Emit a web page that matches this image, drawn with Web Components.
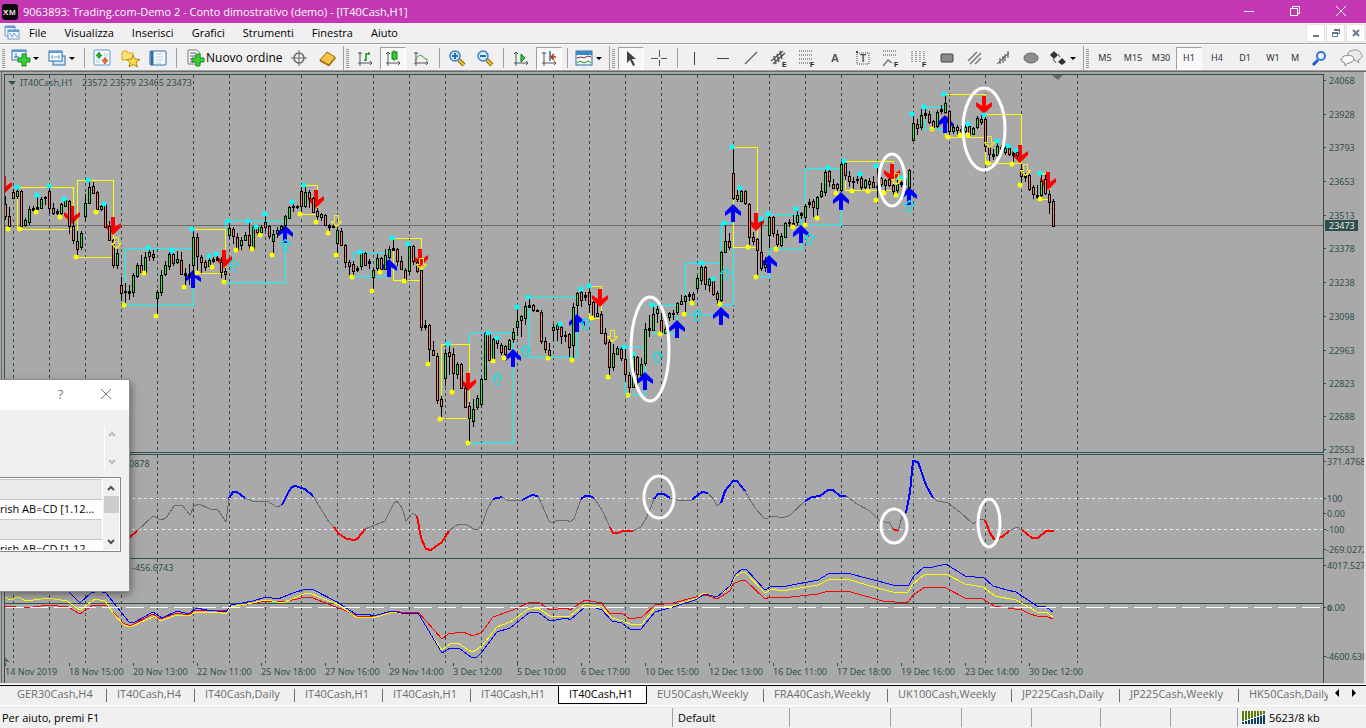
<!DOCTYPE html>
<html lang="it">
<head>
<meta charset="utf-8">
<title>9063893: Trading.com-Demo 2 - Conto dimostrativo (demo) - [IT40Cash,H1]</title>
<style>
  html, body { margin: 0; height: 100%; }
  body { font: 11px/16px "Open Sans", "Noto Sans", sans-serif; color: #000; background: #f0f0f0; overflow: hidden; }
</style>
</head>
<body>
<trading-terminal></trading-terminal>
<script>
const define = (name, css, html, init) => {
  customElements.define(name, class extends HTMLElement {
    connectedCallback() {
      if (this.shadowRoot) return;
      const root = this.attachShadow({ mode: 'open' });
      root.innerHTML = `<style>
        * { box-sizing: border-box; }
        button { font: inherit; color: inherit; border: 0; margin: 0; padding: 0; background: none; white-space: nowrap; }
        svg { display: block; }
        ${css}</style>${typeof html === 'function' ? html(this) : html}`;
      if (init) init(root, this);
    }
  });
};

/* ---------- icons ---------- */
const PLUS = '<path d="M10 6h4v4h4v4h-4v4h-4v-4H6v-4h4z" transform="translate(-1,-2)" fill="#3ad03a" stroke="#128a18"/>';
const AXES = '<path d="M3 2v14M1 13h14M1 4l2-2 2 2M13 11l2 2-2 2" fill="none" stroke="#555"/>';
const LENS = (sign) => `<path d="M10 10l5 5" stroke="#8a6508" stroke-width="4"/><path d="M10 10l5 5" stroke="#f2c832" stroke-width="2"/><circle cx="6" cy="6" r="5" fill="#d4ebfb" stroke="#3a7fc0" stroke-width="1.5"/><path d="${sign}" stroke="#2a6cb0" stroke-width="2"/>`;
const FDOTS = (n) => Array.from({ length: n }, (_, i) => `<path d="M0 ${1 + i * 4}h14" stroke="#444" stroke-dasharray="1 1"/>`).join('');
const letter = (c, x, y, size, fill) => `<text x="${x}" y="${y}" fill="${fill}" style="font:bold ${size}px 'Liberation Sans',Arial,sans-serif">${c}</text>`;
const F = letter('F', 11, 17, 7, '#222');
const ICONS = {
  xm: '<rect width="16" height="16" rx="3" fill="#0a0a0a"/>' + letter('X', 1, 11, 8, '#fff') + letter('M', 7, 11, 8, '#ddd') + '<path d="M2 11l2-2" stroke="#e02020" stroke-width="1.5"/>',
  doc: '<path d="M1 1h10v4M1 1v10h3" fill="none" stroke="#6a9bd0"/><path d="M1 2h10" stroke="#6a9bd0" stroke-width="2"/><rect x="4" y="5" width="11" height="9" fill="#f4f9ff" stroke="#6a9bd0"/><path d="M4 6h11" stroke="#6a9bd0" stroke-width="2"/><path d="M6 8l2 4 2-4 2 3 2 1" fill="none" stroke="#6a9bd0"/>',
  newchart: '<rect x="-1" y="0" width="14" height="10" fill="#eef6fd" stroke="#3b76b0"/><path d="M-1 1h14" stroke="#5b9bd5" stroke-width="2"/><path d="M3 3v5M1 7h5" stroke="#3b76b0"/>' + PLUS,
  profiles: '<rect x="4" y="6" width="12" height="9" fill="#cfe6f8" stroke="#2f6ea8"/><rect x="0" y="1" width="13" height="10" fill="#f4faff" stroke="#2f6ea8"/><path d="M0 2h13" stroke="#5b9bd5" stroke-width="2"/><path d="M2 7h9M3 5v4M10 5v4" stroke="#8aa9c4"/>',
  market: '<rect x="0" y="0" width="16" height="15" rx="1" fill="#f5fafe" stroke="#5b9bd5"/><path d="M10 4h4M10 6h4M2 10h4M2 12h4" stroke="#b8cde0"/><path d="M5 2l3 4H6v2H4V6H2z" fill="#28b428" stroke="#0b6b10" stroke-width=".6"/><path d="M11 14l3-4h-2V8h-2v2H8z" fill="#f0702a" stroke="#b03a08" stroke-width=".6"/>',
  navigator: '<path d="M0 3q0-2 2-2h3l1 2h5v7H0z" fill="#fbe27a" stroke="#d8a820"/><path d="M11 5l2 4 5 .5-4 3 1.500 4.500-4.500-2.500-4 2.500 1-4.500-3-3 4.500-.5z" fill="#fbd84a" stroke="#b8860b"/>',
  terminal: '<rect x="0" y="1" width="16" height="14" rx="1" fill="#f5fafe" stroke="#2f6ea8"/><path d="M2 1v14" stroke="#2f6ea8" stroke-width="3"/><path d="M6 4h7M6 7h7M6 10h7M6 13h5" stroke="#b8cde0"/>',
  order: '<path d="M1 0h9l3 3v11H1z" fill="#fff" stroke="#777"/><path d="M3 3h6M3 6h7M3 9h5M3 12h4" stroke="#555"/>' + PLUS,
  target: '<circle cx="8" cy="8" r="5" fill="none" stroke="#666" stroke-width="1.500"/><path d="M8 0v16M0 8h16" stroke="#666"/>',
  book: '<path d="M1 10L8 2l8 5-6 8z" fill="#f5c542" stroke="#9a6a08"/><path d="M1 10l9 5 6-8v2l-6 7-9-5z" fill="#fff3c4" stroke="#9a6a08"/>',
  bars: AXES + '<path d="M9 3v8M7 10h2M9 4h3M12 2v3" stroke="#149a1e" stroke-width="1.500" fill="none"/>',
  candles: AXES + '<path d="M9 0v11" stroke="#0a7a10"/><rect x="7" y="2" width="5" height="7" fill="#30d040" stroke="#0a7a10"/>',
  line: AXES + '<path d="M2 11q4-8 7-5t6 4" fill="none" stroke="#2b9e33"/>',
  zoomin: LENS('M3 6h6M6 3v6'),
  zoomout: LENS('M3 6h6'),
  autoscroll: AXES + '<path d="M8 4l4 4-4 4z" fill="#2fd03f" stroke="#0a7a10"/>',
  shift: AXES + '<path d="M9 1v10" stroke="#2f6ea8" stroke-width="1.500"/><path d="M15 7h-5M13 4l-3 3 3 3" fill="none" stroke="#b03a08" stroke-width="1.500"/>',
  template: '<rect x="0" y="1" width="16" height="14" fill="#f5fafe" stroke="#2f6ea8"/><path d="M0 3h16" stroke="#3b86c8" stroke-width="4"/><path d="M1 8l4-1 3 1 4-2 3 1" fill="none" stroke="#902020"/><path d="M1 13l3-2 4 2 4-2 3 2" fill="none" stroke="#149a1e"/>',
  cursor: '<path d="M4 1v12l3-3 3 6 2-1-3-6h4z" fill="#444"/>',
  cross: '<path d="M8 0h1v7H8zM8 10h1v6H8zM0 8h7v1H0zM10 8h6v1h-6z" fill="#555"/>',
  vline: '<path d="M7 2h1v13H7z" fill="#444"/>',
  hline: '<path d="M2 8h12v1H2z" fill="#444"/>',
  trend: '<path d="M2 14L14 2" stroke="#666" stroke-width="1.500"/>',
  channel: '<path d="M0 11L12 1M2 14L14 3M3 6l2 8M6 4l2 8M9 1l2 8" stroke="#555" stroke-width="1.500"/>' + letter('E', 11, 17, 7, '#222'),
  fibo: FDOTS(4) + F,
  text: letter('A', 4, 12, 11, '#555'),
  label: '<rect x="2" y="3" width="12" height="11" fill="none" stroke="#444" stroke-dasharray="1 1"/><rect x="1" y="1" width="2" height="2" fill="#444"/>' + letter('T', 5, 12, 10, '#555'),
  fibofan: FDOTS(2) + '<path d="M0 16l5-6 4 3" fill="none" stroke="#777" stroke-width="1.500"/>' + F,
  fibotime: '<path d="M1 1v12M5 1v12M9 1v12M13 1v9" stroke="#444" stroke-dasharray="1 1"/>' + F,
  rect: '<rect x="2" y="4" width="12" height="8" rx="1" fill="#8c8c8c" stroke="#444"/>',
  parallel: '<path d="M1 11L10 2M3 14L14 3M8 14l6-6" stroke="#777" stroke-width="1.500"/>',
  wave: '<path d="M2 14L14 3M5 8v6M8 6v7M10 4v7M13 1v7" stroke="#444" fill="none"/>',
  ellipse: '<ellipse cx="8" cy="8" rx="7" ry="5" fill="#8c8c8c" stroke="#666"/>',
  arrows: '<path d="M4 1l4 4-4 4-4-4zM12 8l4 4-4 3-4-3z" fill="#333"/><path d="M3 9l3 4M8 4l2 3" stroke="#444"/>',
  search: '<path d="M7 10l-5 5" stroke="#2358c8" stroke-width="3"/><circle cx="10" cy="6" r="4" fill="#eef4ff" stroke="#3a6fe0" stroke-width="2"/>',
  chat: '<path d="M7 1q8-3 11 2t-3 7l1 3-4-3q-6 0-7-4t2-5z" fill="#eaeaea" stroke="#999"/><path d="M1 6q6-2 9 1t-3 6H5l-3 3v-3q-4-1-4-3t3-4z" fill="#f8f8f8" stroke="#888"/>'
};
const icon = (n, s = 16) => `<svg width="${s}" height="${s}" viewBox="0 0 ${s} ${s}" overflow="visible" aria-hidden="true">${ICONS[n]}</svg>`;

/* ---------- frame ---------- */
define('title-bar', `
  :host { display: flex; align-items: center; height: 23px; background: #c436b2; color: #fff; padding: 0 2px 0 2px; }
  h1 { font: inherit; margin: 0 auto 0 5px; }
  button { width: 46px; height: 23px; display: grid; place-items: center; padding-bottom: 2px; }
`, `${icon('xm')}<h1>9063893: Trading.com-Demo 2 - Conto dimostrativo (demo) - [IT40Cash,H1]</h1>
  <button aria-label="Riduci"><svg width="10" height="10"><path d="M0 5h10v1H0z" fill="#fff"/></svg></button>
  <button aria-label="Ripristina"><svg width="10" height="10" shape-rendering="crispEdges" fill="#fff"><path d="M0 2h8v8H0zM1 3v6h6V3z" fill-rule="evenodd"/><path d="M2 0h8v8H8V7h1V1H3v1H2z"/></svg></button>
  <button aria-label="Chiudi"><svg width="10" height="10"><path d="M0 0l10 10M10 0L0 10" stroke="#fff"/></svg></button>`);

define('menu-bar', `
  :host { display: flex; align-items: center; height: 20px; padding-left: 4px; background: #f0f0f0; }
  nav { display: flex; margin: 0 auto 0 0; }
  nav button { padding: 0 9px; height: 20px; }
  .mdi { width: 19px; height: 18px; background: #fff; border: 1px solid #e3e3e3; margin-right: 1px; display: grid; place-items: center; }
`, () => `${icon('doc')}<nav>${['File', 'Visualizza', 'Inserisci', 'Grafici', 'Strumenti', 'Finestra', 'Aiuto'].map(t => `<button>${t}</button>`).join('')}</nav>
  <button class="mdi" aria-label="Riduci grafico"><svg width="8" height="8"><path d="M1 6h6v2H1z" fill="#66788c"/></svg></button>
  <button class="mdi" aria-label="Ripristina grafico"><svg width="8" height="8" shape-rendering="crispEdges" fill="#66788c"><path d="M0 3h6v5H0zM1 5v2h4V5z" fill-rule="evenodd"/><path d="M2 0h6v5H6V4h1V2H2z"/></svg></button>
  <button class="mdi" aria-label="Chiudi grafico"><svg width="8" height="8"><path d="M1 1l6 6M7 1L1 7" stroke="#66788c" stroke-width="2"/></svg></button>`);

define('tool-button', `
  :host { display: block; }
  button { display: flex; align-items: center; justify-content: center; width: 28px; height: 24px; }
  :host([split]) button { width: 36px; justify-content: flex-start; padding-left: 5px; gap: 4px; }
  :host([wide]) button { width: 105px; justify-content: flex-start; padding-left: 7px; gap: 3px; font-size: 12px; padding-bottom: 1px; }
  :host([tf]) button { font: 9px/16px "Noto Sans", sans-serif; color: #333; }
  :host([narrow]) button { width: 16px; }
  :host([end]) button { width: 32px; }
  :host([pressed]) button { width: 26px; margin: 0 1px; height: 23px; background: #f8f8f8; border: 1px solid #fff; border-top-color: #a0a0a0; border-left-color: #a0a0a0; }
`, el => {
  const n = el.getAttribute('icon');
  return `<button ${el.title ? `aria-label="${el.title}"` : ''}>${n ? icon(n) : ''}<slot></slot>${el.hasAttribute('split') ? '<svg width="6" height="3"><path d="M0 0h6L3 3z"/></svg>' : ''}</button>`;
});

define('tool-bar', `
  :host { display: flex; align-items: center; height: 29px; padding: 2px 0 1px; background: #f0f0f0; border-top: 1px solid #a0a0a0; border-bottom: 1px solid #696969; box-shadow: inset 0 1px #fff, inset 0 -1px #a0a0a0; }
  .group { display: flex; align-items: center; margin-right: 2px; }
  .last { margin-right: auto; }
  i { width: 8px; height: 25px; border-left: 1px solid #a0a0a0; padding: 3px 1px 3px 2px; }
  i::before { content: ""; display: block; width: 3px; height: 19px; background: repeating-linear-gradient(#999 0 1px, #f0f0f0 1px 2px); }
  .group:first-of-type i { border-color: transparent; padding-left: 1px; }
  b { width: 8px; height: 20px; background: linear-gradient(#a0a0a0, #a0a0a0) 4px 0 / 1px 100% no-repeat; }
`, () => {
  const t = (n, title, a = '') => `<tool-button icon="${n}" title="${title}" ${a}></tool-button>`;
  const tf = (n, a = '') => `<tool-button tf ${a}>${n}</tool-button>`;
  return `<div class="group"><i></i>${t('newchart', 'Nuovo grafico', 'split')}${t('profiles', 'Profili', 'split')}<b></b>${t('market', 'Market Watch')}${t('navigator', 'Navigatore')}${t('terminal', 'Terminale')}<b></b><tool-button icon="order" wide>Nuovo ordine</tool-button>${t('target', 'Strategia')}${t('book', 'MetaEditor')}</div>
  <div class="group"><i></i>${t('bars', 'Barre')}${t('candles', 'Candele', 'pressed')}${t('line', 'Linea')}<b></b>${t('zoomin', 'Ingrandisci')}${t('zoomout', 'Riduci')}<b></b>${t('autoscroll', 'Scorrimento')}${t('shift', 'Spostamento', 'pressed')}<b></b>${t('template', 'Modelli', 'split')}</div>
  <div class="group"><i></i>${t('cursor', 'Cursore', 'pressed')}${t('cross', 'Mirino')}<b></b>${t('vline', 'Linea verticale')}${t('hline', 'Linea orizzontale')}${t('trend', 'Trendline')}${t('channel', 'Canale')}${t('fibo', 'Fibonacci')}${t('text', 'Testo')}${t('label', 'Etichetta')}${t('fibofan', 'Ventaglio')}${t('fibotime', 'Fasce orarie')}${t('rect', 'Rettangolo')}${t('parallel', 'Linee parallele')}${t('wave', 'Onde')}${t('ellipse', 'Ellisse')}${t('arrows', 'Frecce', 'split')}</div>
  <div class="group last"><i></i>${tf('M5')}${tf('M15')}${tf('M30')}${tf('H1', 'pressed')}${tf('H4')}${tf('D1')}${tf('W1')}${tf('M', 'narrow')}</div>
  ${t('search', 'Cerca', 'end')}${t('chat', 'Chat', 'end')}`;
});

/* ---------- market data, in window coordinates ---------- */
/* candle: high, body top, body bottom, low, then u (up) or d (down); one every 4px from x = 5 */
const CANDLES = `196 204 216 220d|207 216 226 229d|189 192 198 199d|187 191 196 199u|190 191 226 229d|218 220 225 227u|206 209 222 225u|206 208 210 212d|196 207 209 210u|197 199 208 209u|196 197 198 205d|187 191 208 214d|203 208 213 215d|209 211 213 215d|203 204 213 216u|199 200 206 207u|200 201 226 234d|219 226 240 244d|231 241 249 257d|231 233 247 250u|194 203 216 221u|180 187 203 204u|182 186 193 194d|191 192 209 210d|205 206 209 211u|203 204 227 228d|221 226 240 241d|239 240 265 268d|249 253 265 269u|277 285 293 301d|283 291 292 305d|285 291 293 300d|273 275 292 297u|263 265 276 278u|255 265 272 273d|252 257 273 274u|249 252 256 261u|250 254 257 261d|290 292 298 316u|270 275 292 296u|261 265 274 276u|252 254 266 270u|251 254 263 266d|251 259 262 264u|252 260 274 275d|268 273 275 287d|264 274 275 285d|229 237 265 274u|233 237 256 273d|255 257 262 273d|260 262 267 271d|257 260 266 267u|257 259 261 263u|254 258 260 261d|257 262 272 278d|268 271 274 282d|222 228 235 239u|227 229 236 244d|233 237 250 251d|237 240 245 250u|232 235 240 241u|222 235 245 250d|226 227 249 250u|226 227 232 235d|225 227 232 235u|215 222 227 231d|225 226 236 239d|230 234 241 255u|227 230 233 238u|225 226 229 231u|215 216 225 229u|206 207 218 219u|203 206 207 212d|205 206 207 209d|187 191 206 214d|187 192 206 208u|190 192 198 208d|197 198 212 213d|208 211 216 221d|213 214 217 221u|214 215 225 226d|224 225 227 233d|224 226 227 228d|225 230 243 255u|228 231 245 246d|244 245 262 268d|260 262 266 275d|261 264 271 276d|266 268 270 272u|252 253 266 270u|252 253 265 266d|259 261 263 269u|268 270 277 291u|254 258 268 271u|257 258 269 271d|249 255 269 270u|246 249 257 259u|239 248 250 251d|248 249 261 266d|256 261 269 270d|268 270 280 281d|245 246 271 275u|245 246 261 265d|260 262 271 273d|269 270 327 331d|320 325 327 330d|324 325 349 363d|341 350 355 356d|353 356 400 404d|396 399 406 418d|349 353 378 386u|346 352 356 375d|348 354 373 391d|362 364 374 379u|363 364 388 389d|385 388 407 408d|402 406 418 443d|399 409 421 427u|395 398 407 410u|378 379 404 407u|332 333 379 380u|333 334 360 361d|338 339 359 361u|337 339 343 349d|343 345 352 355d|345 346 354 358d|339 340 349 350u|328 332 339 343u|307 321 327 336u|315 316 320 337u|302 306 318 325u|297 305 307 308d|304 305 310 312d|309 310 311 312d|310 312 341 344d|337 341 349 353d|343 350 355 357d|324 327 330 341d|323 325 329 341u|324 327 336 344d|331 335 336 342d|333 334 347 357d|303 307 345 359u|292 293 305 315u|288 292 300 307d|292 295 297 301u|286 292 304 313d|301 302 317 318d|304 313 316 317u|311 314 333 334d|328 333 343 345d|338 342 367 377d|344 353 367 371u|346 348 354 355u|347 349 358 361d|348 359 374 382d|372 375 387 393d|353 356 387 388u|356 357 374 385d|358 364 375 376u|323 329 363 366u|315 328 330 337d|306 314 330 331u|306 309 313 323u|313 320 332 334d|317 329 333 334u|312 313 317 321u|310 313 314 320d|302 303 312 315u|295 301 304 305u|295 296 301 313u|292 294 296 301d|292 294 299 303d|275 278 288 292u|263 267 280 285u|266 267 284 290d|278 279 285 292u|279 280 294 296d|291 293 299 304d|251 252 300 304u|224 241 252 253u|233 241 247 250d|147 173 198 200d|190 195 199 202d|187 191 201 202u|190 191 203 205d|203 204 237 247d|232 237 241 245d|238 239 250 277d|220 252 268 271d|257 264 267 272u|215 217 235 248u|216 217 233 237d|230 234 244 248d|233 236 245 247u|222 223 237 238u|219 222 223 227d|215 223 224 227d|209 215 222 225u|212 213 215 219d|204 206 217 224u|199 202 204 208u|199 201 207 217d|196 197 208 218u|183 191 196 198u|170 172 192 196u|168 171 181 187d|179 184 188 189d|183 184 188 193d|162 164 190 192u|161 163 175 180d|171 176 181 187d|177 181 182 190d|176 179 180 184d|174 178 187 190d|179 180 187 189u|178 181 184 189d|176 182 187 188d|166 186 187 199d|177 178 184 187d|179 180 185 193u|178 179 185 187d|184 185 191 195d|180 184 190 195u|177 182 184 187u|177 178 184 187d|169 170 187 190u|115 123 140 141u|119 124 128 135d|109 115 127 130u|107 113 115 119u|111 114 122 124d|120 121 127 129d|110 112 126 128u|105 109 111 114d|94 103 112 114u|110 111 131 137d|124 127 131 134u|125 127 130 135d|126 129 131 134d|125 127 131 133u|124 126 135 136d|127 128 134 135u|116 118 127 129u|115 119 122 125d|115 119 146 152d|146 147 154 163d|149 154 156 160d|143 146 155 156u|145 147 149 152u|146 148 152 155u|146 148 154 156d|152 153 155 163u|150 152 155 159d|164 169 176 184d|173 175 177 182d|174 175 189 191d|185 187 194 199d|185 195 197 199d|174 181 195 199u|175 179 193 195d|190 194 202 214d|199 201 226 227d`;

const CYAN_DOTS = '17,187 37,195 49,186 64,199 88,180 104,204 148,248 172,251 192,229 209,256 216,254 228,221 248,221 256,227 265,214 292,202 304,185 360,252 392,238 408,244 448,344 488,333 497,338 517,307 528,297 560,324 581,289 589,286 624,347 633,354 652,305 701,263 713,279 724,223 732,147 740,188 761,219 768,214 796,209 828,168 844,161 860,174 876,166 901,178 912,114 924,107 944,94 968,124 984,115 997,141 1008,146 1016,150 1040,173';
const YELLOW_DOTS = '8,229 20,229 36,212 60,217 76,257 96,212 124,305 144,273 156,316 184,287 197,273 212,267 224,282 236,250 252,249 260,235 272,255 300,214 316,222 328,233 336,255 352,277 372,291 380,272 404,281 428,364 440,419 452,392 468,443 493,361 504,358 548,358 572,360 592,318 608,377 628,395 660,334 684,314 692,303 720,304 748,247 756,277 776,249 793,227 805,225 817,218 836,193 852,191 868,191 876,200 884,193 896,195 932,129 948,137 960,135 968,135 988,163 1012,164 1020,185 1040,199';
/* x1 y1 x2 y2 */
const CYAN_BOXES = '125 248 193 305|225 221 285 282|353 252 389 276|469 333 513 443|529 297 577 357|625 347 645 394|653 305 677 333|685 263 721 314|721 223 733 304|757 219 769 277|769 214 801 249|805 168 841 225|897 178 909 195|925 107 945 129';
const YELLOW_BOXES = '17 187 73 229|77 180 113 257|193 229 225 273|301 185 317 214|393 238 421 280|441 344 469 418|589 286 601 318|733 147 757 247|845 161 893 190|945 94 985 137|985 114 1021 163|1041 173 1049 199';
const SELL = '4,194 72,224 113,235 224,268 316,208 420,267 468,391 600,307 756,231 892,182 984,114 1020,163 1048,190';
const BUY = '193,270 285,225 389,259 513,349 577,314 645,372 677,320 721,307 733,204 769,255 801,225 841,192 909,187 945,115';
const BUY_HINT = '285,239 233,259 497,373 525,345 585,318 657,351 697,309 725,268 809,233 909,200';
const SELL_HINT = '116,249 336,227 421,270 612,342 896,185 989,148 1025,176';

/* oscillator: colour letter followed by its points; each run starts at the end of the previous one */
const OSC = [
  ['r', '118,545 130,537 137,531'],
  ['g', '153,516 161,520 166,518 174,506 182,505 190,515 194,506 199,504 210,509 218,510 226,522 229,498'],
  ['b', '233,492 237,492 245,498'],
  ['g', '252,501 267,501 277,507 282,505'],
  ['b', '289,491 292,487 295,486 305,489 313,496'],
  ['g', '329,522 334,527'],
  ['r', '339,534 347,539 355,540 358,538 365,529'],
  ['g', '370,527 385,521 394,503 397,501 402,508 406,521 413,513 417,516'],
  ['r', '421,538 426,549 431,550 442,542 449,531'],
  ['g', '455,526 460,524 467,525 474,529 478,529 482,525 487,510 493,499'],
  ['b', '502,497'],
  ['g', '507,500 522,500'],
  ['b', '532,495 538,496'],
  ['g', '549,521 553,523 558,520 567,520 570,522 574,519 581,499'],
  ['b', '585,496 590,496 594,498'],
  ['g', '602,510 610,527'],
  ['r', '613,533 618,533 623,531 633,531'],
  ['g', '641,527 647,517 654,499'],
  ['b', '658,494 664,494 670,498'],
  ['g', '677,500 692,500'],
  ['b', '694,498 702,492 708,493'],
  ['g', '714,500 717,506 721,503'],
  ['b', '725,491 733,481 737,481 745,491'],
  ['g', '755,508 765,519 773,516 783,518 790,515 805,501'],
  ['b', '812,497 820,496 828,490 833,490 840,496 846,496'],
  ['g', '857,504 870,511 880,521 890,523 893,529'],
  ['r', '898,531'],
  ['g', '902,517 906,513'],
  ['b', '910,492 913,461 918,462 926,485 933,498'],
  ['g', '938,501 948,503 960,512 973,524 981,519 985,520'],
  ['r', '990,533 994,539 1002,537 1009,531'],
  ['g', '1017,527 1022,530'],
  ['r', '1032,538 1038,538 1046,531 1054,531']
];
const OSC_COLORS = { r: ['#f00', 2], b: ['#00f', 2], g: ['#696969', 1] };
const MACD = {
  '#f00': '5,606 26,608 48,605 68,607 80,614 93,605 107,606 123,623 130,626 153,614 160,619 177,613 189,615 195,610 226,611 230,607 266,601 283,602 306,597 313,598 338,608 340,608 357,616 373,616 393,611 406,613 418,612 442,639 448,634 463,632 473,636 482,632 493,617 513,610 530,602 538,602 550,610 567,608 570,610 585,600 602,603 609,613 623,614 630,619 642,617 655,605 673,603 700,596 707,595 717,599 730,591 733,584 740,581 745,580 765,599 770,597 782,598 818,594 828,591 847,591 883,601 906,603 909,601 913,595 925,587 946,588 965,598 983,599 994,606 1022,610 1030,614 1037,616 1048,617 1053,619',
  '#ff0': '5,597 10,600 18,597 26,601 48,598 67,601 80,610 95,599 105,601 113,613 124,625 130,627 155,616 160,621 177,615 189,616 195,612 217,612 226,614 230,607 247,604 266,600 283,603 306,593 312,594 339,605 356,617 373,618 393,612 406,614 418,613 430,633 442,650 450,644 458,643 468,650 473,652 482,646 497,627 510,622 530,608 538,608 550,616 570,616 585,604 602,607 612,618 623,621 632,625 642,624 655,608 673,606 697,598 703,593 717,597 730,587 735,577 740,573 745,572 765,593 772,589 782,591 818,585 828,580 847,579 877,588 897,593 908,592 913,584 925,574 946,574 965,584 983,587 995,596 1016,600 1037,612 1046,612 1053,617',
  '#00f': '5,588 57,591 68,591 80,603 91,593 98,591 106,593 117,607 129,622 135,622 153,612 162,618 177,611 189,614 196,608 207,610 226,612 231,605 253,601 266,597 278,599 293,593 306,589 312,589 337,602 357,615 368,614 373,616 392,611 406,614 418,613 442,653 450,648 460,649 471,657 477,657 482,652 497,632 510,628 530,612 538,612 550,621 567,618 570,620 585,607 593,607 602,610 612,621 622,623 631,630 641,629 655,612 673,607 695,600 705,594 717,597 730,586 735,575 742,569 746,569 765,590 772,586 782,587 818,580 828,574 847,573 893,585 906,586 909,585 913,577 924,567 933,567 946,564 965,576 975,577 983,577 993,586 1007,590 1016,592 1037,606 1046,607 1053,612'
};

const each = (s, f) => s.split(' ').map(p => f(...p.split(',').map(Number))).join('');
const marks = (s, d, attrs) => `<g ${attrs}>${each(s, (x, y) => `<path transform="translate(${x},${y})" d="${d}"/>`)}</g>`;
/* one-pixel frames, cut out of filled rectangles so that they stay sharp */
const boxes = (s, c) => `<path fill="${c}" fill-rule="evenodd" d="${s.split('|').map(b => { const [x, y, X, Y] = b.split(' ').map(Number); return `M${x} ${y}H${X + 1}V${Y + 1}H${x}ZM${x + 1} ${y + 1}V${Y}H${X}V${y + 1}Z`; }).join('')}"/>`;
const SESSIONS = [...Array.from({ length: 29 }, (_, i) => 13 + 36 * i), 1077];
const grid = (y, h) => `<path stroke="#2f4f4f" stroke-dasharray="3 3" fill="none" d="${SESSIONS.map(x => `M${x} ${y}v${h}`).join('')}"/>`;
const ring = (cx, cy, rx, ry) => `<ellipse cx="${cx}" cy="${cy}" rx="${rx}" ry="${ry}" fill="none" stroke="#fff" stroke-width="3"/>`;

const PANES = {
  price() {
    const candles = CANDLES.split('|').map((c, i) => {
      const [h, t, b, l] = c.slice(0, -1).split(' ').map(Number), x = 5 + 4 * i;
      const fill = b - t > 2 ? `<rect x="${x}" y="${t + 1}" width="1" height="${b - t - 1}" fill="${c.endsWith('u') ? '#32e632' : '#ff7f5f'}"/>` : '';
      return `<rect x="${x}" y="${h}" width="1" height="${Math.max(1, l - h)}"/><rect x="${x - 1}" y="${t}" width="3" height="${b - t + 1}"/>${fill}`;
    }).join('');
    return `<g transform="translate(-5,-75)" shape-rendering="crispEdges">${grid(75, 377)}
        <rect x="5" y="225" width="4000" height="1" fill="#696969"/>${boxes(CYAN_BOXES, '#0ff')}${boxes(YELLOW_BOXES, '#ff0')}</g>
      <g transform="translate(-5,-75)">
        <path d="M1052 75h11l-5 5z" fill="#696969"/><path d="M8 81h8l-4 4z" fill="#2f4f4f"/>
        ${marks(SELL, 'M-2-18h4v10l6-4v4L0 0-8-8v-4l6 4z', 'fill="#f00"')}
        ${marks(BUY, 'M-2 18h4V8l6 4V8L0 0-8 8v4l6-4z', 'fill="#00f"')}
        <g shape-rendering="crispEdges">${candles}</g>
        <g fill="#0ff">${each(CYAN_DOTS, (x, y) => `<circle cx="${x}" cy="${y}" r="2.5"/>`)}</g>
        <g fill="#ff0">${each(YELLOW_DOTS, (x, y) => `<circle cx="${x}" cy="${y}" r="2.5"/>`)}</g>
        ${marks(BUY_HINT, 'M0 0h1l5 5v1H3v6h-5V6h-3V5zM0 2l-3 3h2v6h3V5h2L1 2z', 'fill="#10e0e0" fill-rule="evenodd"')}
        ${marks(SELL_HINT, 'M0 0h1l5-5v-1H3v-6h-5v6h-3v1zM0-2l-3-3h2v-6h3v6h2L1-2z', 'fill="#f0e820" fill-rule="evenodd"')}
        ${ring(650, 349, 19, 52)}${ring(892, 180, 13, 26)}${ring(984, 129, 21, 41)}
        <text x="20" y="86">IT40Cash,H1</text><text x="82" y="86">23572 23579 23465 23473</text>
      </g>
      <svg x="100%" overflow="visible"><text class="quote" x="-184" y="61">23473</text></svg>`;
  },
  osc() {
    let last = '';
    const runs = OSC.map(([c, p]) => {
      const pts = `${last} ${p}`; last = p.split(' ').pop();
      return `<polyline points="${pts}" fill="none" stroke="${OSC_COLORS[c][0]}" stroke-width="${OSC_COLORS[c][1]}"/>`;
    }).join('');
    return `<g transform="translate(-5,-455)" shape-rendering="crispEdges">${grid(455, 102)}
        <path d="M6 498H4000M6 529H4000" stroke="#e6e6fa" stroke-dasharray="3 3"/>${runs}</g>
      <g transform="translate(-5,-455)">${ring(659, 497, 15, 21)}${ring(894, 526, 13, 17)}${ring(989, 523, 11, 24)}
        <text x="129" y="467">0878</text></g>`;
  },
  macd() {
    return `<g transform="translate(-5,-559)" shape-rendering="crispEdges">${grid(559, 104)}
        ${Object.entries(MACD).map(([c, p]) => `<polyline points="${p}" fill="none" stroke="${c}"/>`).join('')}
        <path d="M6 607H4000" stroke="#fff" stroke-dasharray="18 6"/></g>
      <g transform="translate(-5,-559)"><path d="M5 657l5 5H5z" fill="#696969"/><text x="132" y="571">-456.6743</text></g>`;
  }
};
/* scale labels: text, centre y */
const SCALES = {
  price: [74, ['24068,80', '23928,114', '23793,147', '23653,181', '23513,215', '23378,248', '23238,282', '23098,316', '22963,350', '22823,383', '22688,416', '22553,449'], 5],
  osc: [454, ['371.4768,461', '100,498', '0.00,513', '-100,529', '-269.0272,549'], 3],
  macd: [558, ['4017.5273,565', '0.00,607', '-4600.6301,656'], 3]
};

define('chart-pane', `
  :host { display: grid; grid-template-columns: minmax(0, 1fr) 40px; min-height: 0; }
  svg { width: 100%; height: 100%; overflow: hidden; }
  svg.scale { overflow: visible; }
  .plot { border: 1px solid #2f4f4f; min-width: 0; min-height: 0; overflow: hidden; }
  text { font: 9px "Noto Sans", sans-serif; fill: #2f4f4f; }
  .quote { font: 66px "Liberation Sans", Arial, sans-serif; fill: #0f0; }
  .now { fill: #e8e8e8; }
  .zero { font-weight: bold; }
`, el => {
  const kind = el.getAttribute('kind'), [top, labels, x] = SCALES[kind];
  return `<div class="plot"><svg role="img" aria-label="${kind}">${PANES[kind]()}</svg></div>
    <svg class="scale"><g transform="translate(0,${-top})">${labels.map(s => {
      const [t, y] = s.split(',');
      const body = kind === 'macd' && t === '0.00' ? '<tspan class="zero">0</tspan>.00' : t;
      return `<rect y="${y}" width="2" height="1" fill="#2f4f4f"/><text x="${t[0] === '-' ? x - 1 : x}" y="${+y + 4}">${body}</text>`;
    }).join('')}
    ${kind === 'price' ? '<rect x="1" y="220" width="33" height="11" fill="#2f4f4f"/><text class="now" x="5" y="229">23473</text>' : ''}</g></svg>`;
});

define('time-axis', `
  :host { display: flex; height: 20px; padding-left: 1px; font: 9px/12px "Noto Sans", sans-serif; color: #2f4f4f; }
  span { flex: none; width: 64px; white-space: nowrap; text-indent: -1px; }
  span::before { content: ""; display: block; width: 1px; height: 3px; background: #2f4f4f; }
`, () => '14 Nov 2019|18 Nov 15:00|20 Nov 13:00|22 Nov 11:00|25 Nov 18:00|27 Nov 16:00|29 Nov 14:00|3 Dec 12:00|5 Dec 10:00|6 Dec 17:00|10 Dec 15:00|12 Dec 13:00|16 Dec 11:00|17 Dec 18:00|19 Dec 16:00|23 Dec 14:00|30 Dec 12:00'.split('|').map(t => `<span>${t}</span>`).join(''));

define('chart-window', `
  :host { display: grid; grid-template-rows: minmax(0, 1fr) 104px 105px 20px; background: #a9a9a9; padding: 2px 0 0 2px; border-left: 1px solid #a9a9a9; border-right: 2px solid #e3e3e3; box-shadow: inset 1px 0 #696969; overflow: hidden; }
  :host > * { margin-left: 1px; }
  chart-pane[kind=price], chart-pane[kind=osc] { margin-bottom: 1px; }
`, '<chart-pane kind="price"></chart-pane><chart-pane kind="osc"></chart-pane><chart-pane kind="macd"></chart-pane><time-axis></time-axis>');

/* ---------- pattern dialog ---------- */
define('pattern-dialog', `
  :host { display: block; width: 129px; height: 211px; background: #f0f0f0; box-shadow: 0 0 0 1px #8c8c8c, 2px 3px 8px rgba(0,0,0,.45); overflow: hidden; }
  header { display: flex; justify-content: flex-end; height: 30px; background: #fff; color: #777; padding-right: 1px; }
  header button { width: 45px; font-size: 13px; display: grid; place-items: center; padding-bottom: 2px; }
  .spin { width: 16px; height: 43px; margin: 16px 9px 8px auto; border-left: 1px solid #fff; display: flex; flex-direction: column; justify-content: space-between; padding: 5px 0 4px 3px; }
  .list { display: flex; width: 121px; height: 75px; border: 1px solid #828790; border-left: 0; padding: 1px; padding-left: 0; background: #fff; }
  ul { flex: 1; margin: 0 1px 0 0; padding: 0; list-style: none; overflow: hidden; background: #eaeaea; border-top: 1px solid #c8c8c8; }
  li { height: 20px; line-height: 17px; border-bottom: 1px solid #c8c8c8; white-space: nowrap; overflow: hidden; }
  li:nth-child(even) { background: #fff; }
  .bar { width: 16px; display: flex; flex-direction: column; background: #f0f0f0; align-items: center; }
  .bar button { height: 17px; width: 16px; display: grid; place-items: center; }
  .bar i { width: 15px; height: 17px; background: #cdcdcd; margin-bottom: auto; }
`, () => {
  const chev = (up, c) => `<svg width="8" height="6"><path d="${up ? 'M1 5l3-3 3 3' : 'M1 1l3 3 3-3'}" fill="none" stroke="${c}" stroke-width="2"/></svg>`;
  return `<header><button aria-label="Aiuto">?</button><button aria-label="Chiudi"><svg width="10" height="10"><path d="M0 0l10 10M10 0L0 10" stroke="#777"/></svg></button></header>
    <div class="spin">${chev(1, '#bbb')}${chev(0, '#bbb')}</div>
    <div class="list"><ul><li></li><li>rish AB=CD [1.12...</li><li></li><li>rish AB=CD [1.12...</li></ul>
    <div class="bar"><button aria-label="Su">${chev(1, '#505050')}</button><i></i><button aria-label="Giù">${chev(0, '#505050')}</button></div></div>`;
});

/* ---------- chart tabs and status ---------- */
define('chart-tabs', `
  :host { display: flex; height: 23px; background: #f0f0f0; border-top: 1px solid #e3e3e3; border-bottom: 1px solid #fff; box-shadow: inset 0 1px #fff; }
  div, nav { display: flex; margin-top: 1px; border-top: 1px solid #000; }
  div { flex: 1; min-width: 0; overflow: hidden; }
  div button { flex: none; width: var(--w); height: 18px; padding: 0 0 2px 10px; color: #6d6d6d; text-align: left; position: relative; }
  div button:first-child { padding-left: 17px; }
  div button::after { content: ""; position: absolute; right: 0; top: 3px; width: 1px; height: 13px; background: #6d6d6d; }
  div button.on { background: #fff; color: #000; border: 1px solid #000; border-top: 0; padding-bottom: 1px; }
  div button.on::after, div button.pre::after { display: none; }
  nav { width: 38px; padding-right: 4px; }
  nav button { flex: 1; display: grid; place-items: center; padding-bottom: 5px; }
`, () => {
  const tabs = [['GER30Cash,H4', 107], ['IT40Cash,H4', 88], ['IT40Cash,Daily', 100], ['IT40Cash,H1', 88], ['IT40Cash,H1', 88], ['IT40Cash,H1', 87], ['IT40Cash,H1', 89], ['EU50Cash,Weekly', 117], ['FRA40Cash,Weekly', 124], ['UK100Cash,Weekly', 124], ['JP225Cash,Daily', 108], ['JP225Cash,Weekly', 119], ['HK50Cash,Daily', 102]];
  return `<div>${tabs.map(([t, w], i) => `<button style="--w:${w}px" class="${i === 6 ? 'on' : i === 5 ? 'pre' : ''}">${t}</button>`).join('')}</div>
    <nav><button aria-label="Indietro"><svg width="4" height="8"><path d="M4 0v8L0 4z"/></svg></button><button aria-label="Avanti"><svg width="4" height="8"><path d="M0 0v8l4-4z"/></svg></button></nav>`;
});

define('status-bar', `
  :host { display: grid; grid-template-columns: minmax(0, 1fr) 117px 101px 71px 70px 69px 70px 67px 129px; height: 22px; background: #f0f0f0; }
  span { padding: 0 0 0 5px; white-space: nowrap; display: flex; align-items: center; gap: 4px; margin: 2px 0 1px; border-left: 1px solid #a0a0a0; }
  span:first-of-type { border: 0; padding-left: 2px; }
  span:last-of-type { padding-left: 4px; }
`, () => `<span>Per aiuto, premi F1</span><span>Default</span><span></span><span></span><span></span><span></span><span></span><span></span>
  <span><svg width="23" height="13" shape-rendering="crispEdges">${Array.from({ length: 8 }, (_, i) => `<rect x="${i * 3}" y="0" width="2" height="${10 - i}" fill="#5c7a10"/><rect x="${i * 3}" y="${11 - i}" width="2" height="${2 + i}" fill="#0b3f66"/>`).join('')}</svg>5623/8 kb</span>`);

define('trading-terminal', `
  :host { display: flex; flex-direction: column; min-height: 100vh; }
  main { flex: 1; display: grid; position: relative; min-height: 500px; }
  pattern-dialog { position: absolute; left: 0; bottom: 92px; }
`, '<title-bar></title-bar><menu-bar></menu-bar><tool-bar></tool-bar><main><chart-window></chart-window><pattern-dialog></pattern-dialog></main><chart-tabs></chart-tabs><status-bar></status-bar>');
</script>
</body>
</html>
